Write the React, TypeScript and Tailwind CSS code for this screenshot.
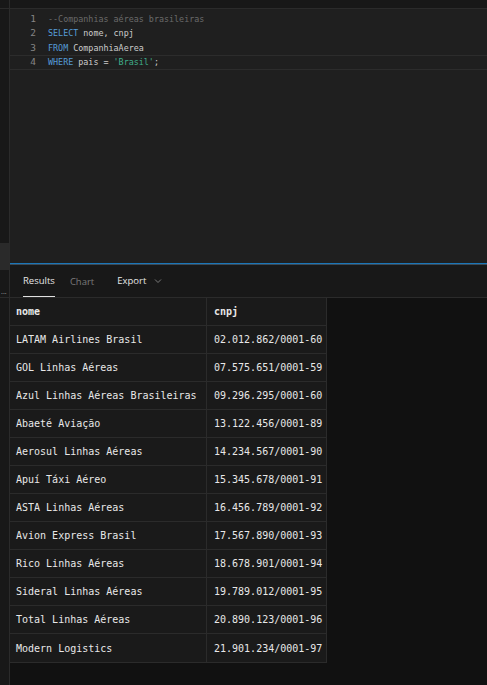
import React from "react";

const rows = [
  ["LATAM Airlines Brasil", "02.012.862/0001-60"],
  ["GOL Linhas Aéreas", "07.575.651/0001-59"],
  ["Azul Linhas Aéreas Brasileiras", "09.296.295/0001-60"],
  ["Abaeté Aviação", "13.122.456/0001-89"],
  ["Aerosul Linhas Aéreas", "14.234.567/0001-90"],
  ["Apuí Táxi Aéreo", "15.345.678/0001-91"],
  ["ASTA Linhas Aéreas", "16.456.789/0001-92"],
  ["Avion Express Brasil", "17.567.890/0001-93"],
  ["Rico Linhas Aéreas", "18.678.901/0001-94"],
  ["Sideral Linhas Aéreas", "19.789.012/0001-95"],
  ["Total Linhas Aéreas", "20.890.123/0001-96"],
  ["Modern Logistics", "21.901.234/0001-97"],
];

const mono = "font-['DejaVu_Sans_Mono',monospace]";

const CodeLine = ({ n, active, children }: { n: number; active?: boolean; children: React.ReactNode }) => (
  <div
    className={`flex h-[14.4px] items-center ${active ? "border-y border-[#2c2c2c]" : ""}`}
  >
    <div className="w-[26px] text-right text-[9.5px] text-[#858585]">{n}</div>
    <div className="ml-[12px] whitespace-pre text-[#cccccc]">{children}</div>
  </div>
);

const App = () => {
  return (
    <div className="flex h-[685px] w-[487px] overflow-hidden bg-[#111111]">
      {/* left strip */}
      <div className="flex w-[10px] flex-col border-r border-[#2b2b2b] bg-[#181818]">
        <div className="h-[9px] border-b border-[#2b2b2b]" />
        <div className="h-[234px]" />
        <div className="h-[27px] bg-[#2a2a2a]" />
        <div className="h-[28px] border-b border-[#2b2b2b] pt-[18px] pl-[1px] text-[7px] leading-none text-[#8a8a8a]">...</div>
        <div className="flex-1" />
      </div>

      <div className="flex flex-1 flex-col">
        <div className="h-[9px] border-b border-[#2b2b2b] bg-[#181818]" />

        {/* editor */}
        <div className={`h-[254px] bg-[#1f1f1f] pt-[3px] text-[8.4px] ${mono}`}>
          <CodeLine n={1}>
            <span className="text-[#6a6a6a]">--Companhias aéreas brasileiras</span>
          </CodeLine>
          <CodeLine n={2}>
            <span className="text-[#569cd6]">SELECT</span> nome, cnpj
          </CodeLine>
          <CodeLine n={3}>
            <span className="text-[#569cd6]">FROM</span> CompanhiaAerea
          </CodeLine>
          <CodeLine n={4} active>
            <span className="text-[#569cd6]">WHERE</span> pais = <span className="text-[#3fae8a]">'Brasil'</span>;
          </CodeLine>
        </div>

        <div className="h-[1px] bg-[#1b76b8]" />
        <div className="h-[1px] bg-[#3b4a56]" />

        {/* tabs */}
        <div className="flex h-[33px] items-stretch border-b border-[#2b2b2b] bg-[#181818] pl-[13px] font-['Open_Sans',sans-serif] text-[9.5px]">
          <div className="flex flex-col justify-center border-b-[1.5px] border-[#e0e0e0] pt-[2px] text-[#e6e6e6]">Results</div>
          <div className="ml-[15px] flex items-center pt-[2px] text-[#7a7a7a]">Chart</div>
          <div className="ml-[23px] flex items-center gap-[8px] text-[#e6e6e6]">
            <span>Export</span>
            <svg width="8" height="6" viewBox="0 0 8 6" fill="none">
              <path d="M1 1.5 L4 4.5 L7 1.5" stroke="#7a7a7a" strokeWidth="1" />
            </svg>
          </div>
        </div>

        {/* results */}
        <div className={`flex-1 ${mono} text-[10px]`}>
          <div className="w-[317px] border-b border-r border-[#2b2b2b] bg-[#1a1a1a] text-[#e8e8e8]">
            <div className="flex h-[28px] border-b border-[#2b2b2b]">
              <div className="flex w-[197px] items-center border-r border-[#2b2b2b] pl-[6px] font-bold">nome</div>
              <div className="flex flex-1 items-center pl-[7px] font-bold">cnpj</div>
            </div>
            {rows.map(([nome, cnpj], i) => (
              <div
                key={cnpj}
                className={`flex h-[28px] ${i < rows.length - 1 ? "border-b border-[#2b2b2b]" : ""}`}
              >
                <div className="flex w-[197px] items-center border-r border-[#2b2b2b] pl-[6px] whitespace-pre">{nome}</div>
                <div className="flex flex-1 items-center pl-[7px] whitespace-pre">{cnpj}</div>
              </div>
            ))}
          </div>
        </div>
      </div>
    </div>
  );
};

export default App;
